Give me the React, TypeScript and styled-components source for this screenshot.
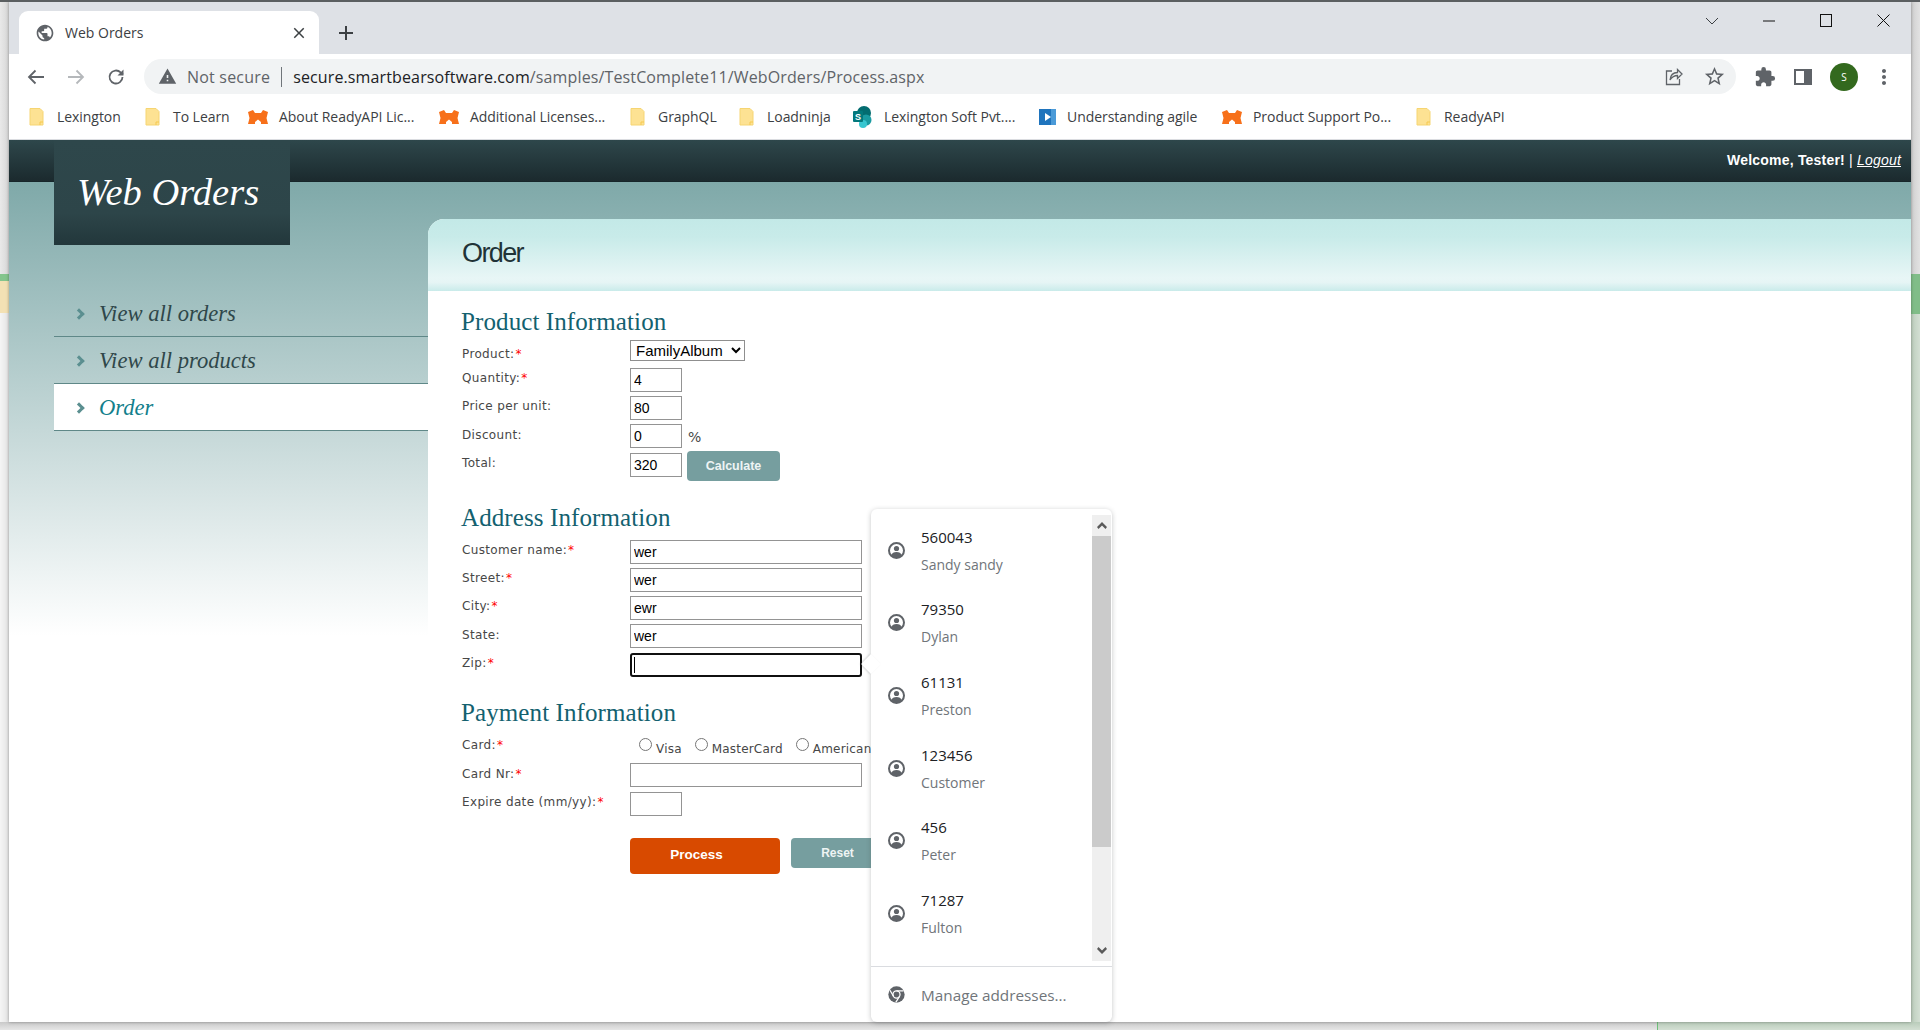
import styled, { createGlobalStyle } from "styled-components";
import { MdAdd, MdClose, MdExtension, MdMoreVert, MdPublic, MdStarBorder, MdWarning } from "react-icons/md";

type BookmarkKind = "folder" | "fox" | "sharepoint" | "video";

const bookmarks: { label: string; kind: BookmarkKind; w: number }[] = [
  { label: "Lexington", kind: "folder", w: 116 },
  { label: "To Learn", kind: "folder", w: 103 },
  { label: "About ReadyAPI Lic...", kind: "fox", w: 191 },
  { label: "Additional Licenses...", kind: "fox", w: 191 },
  { label: "GraphQL", kind: "folder", w: 109 },
  { label: "Loadninja", kind: "folder", w: 114 },
  { label: "Lexington Soft Pvt....", kind: "sharepoint", w: 186 },
  { label: "Understanding agile", kind: "video", w: 183 },
  { label: "Product Support Po...", kind: "fox", w: 194 },
  { label: "ReadyAPI", kind: "folder", w: 100 },
];

const addresses = [
  { zip: "560043", name: "Sandy sandy" },
  { zip: "79350", name: "Dylan" },
  { zip: "61131", name: "Preston" },
  { zip: "123456", name: "Customer" },
  { zip: "456", name: "Peter" },
  { zip: "71287", name: "Fulton" },
];

const BookmarkIcon = ({ kind }: { kind: BookmarkKind }) => {
  if (kind === "folder")
    return (
      <svg width="15" height="19" viewBox="0 0 15 19">
        <path d="M1 1.500h10l3 3V18H1z" fill="#fde293" stroke="#f6d572" />
        <path d="M11 18v-3h3" fill="none" stroke="#f6c94f" />
      </svg>
    );
  if (kind === "fox")
    return (
      <svg width="20" height="14" viewBox="0 0 20 14">
        <path d="M0 2l5-2 2 3h6l2-3 5 2-1.500 6L20 14h-7v-2l-3-2.500L7 12v2H0l1.500-6z" fill="#f7701a" />
      </svg>
    );
  if (kind === "sharepoint")
    return (
      <svg width="20" height="22" viewBox="0 0 20 22">
        <circle cx="11" cy="7" r="7" fill="#036c70" />
        <circle cx="13" cy="14" r="5.500" fill="#1a9ba1" />
        <circle cx="10" cy="18" r="4" fill="#37c6d0" />
        <rect x="0" y="5" width="10" height="11" rx="1" fill="#03787c" />
        <text x="5" y="14" fontSize="9" fontWeight="700" textAnchor="middle" fill="#fff" fontFamily="Liberation Sans">
          S
        </text>
      </svg>
    );
  return (
    <svg width="17" height="16" viewBox="0 0 17 16">
      <rect width="17" height="16" fill="#1f74bd" />
      <rect x="12" width="5" height="16" fill="#4a9ad8" />
      <path d="M6 4l6 4-6 4z" fill="#fff" />
    </svg>
  );
};

const ChromeLogo = () => (
  <svg width="17" height="17" viewBox="0 0 24 24">
    <circle cx="12" cy="12" r="11.500" fill="#5f6368" />
    <circle cx="12" cy="12" r="5" fill="#5f6368" stroke="#fff" strokeWidth="1.800" />
    <path d="M12 7h10M7.700 14.500L2.800 6M16.300 14.500L11 23" stroke="#fff" strokeWidth="1.800" fill="none" />
  </svg>
);

const PersonIcon = () => (
  <svg width="17" height="17" viewBox="0 0 17 17">
    <circle cx="8.500" cy="8.500" r="7.500" fill="none" stroke="#5f6368" strokeWidth="2" />
    <circle cx="8.500" cy="6.500" r="2.600" fill="#5f6368" />
    <path d="M3 13.500c.8-2.500 3-3.500 5.500-3.500s4.700 1 5.500 3.500c-1.500 1.800-3.300 2.500-5.500 2.500s-4-.7-5.500-2.500z" fill="#5f6368" />
  </svg>
);

const App = () => (
  <Screen>
    <GlobalStyle />
    <TopRow>
      <Strip>
        <StripBlock $h={272} $bg="linear-gradient(90deg,#e9e9e9,#d6d6d6)" />
        <StripBlock $h={7} $bg="#84c58d" />
        <StripBlock $h={32} $bg="#f3e1b4" />
        <StripBlock $h={709} $bg="linear-gradient(90deg,#f5f5f5,#e3e3e3)" />
      </Strip>
      <Window>
        <TabStrip>
          <Tab>
            <MdPublic size={20} color="#5f6368" />
            <TabTitle>Web Orders</TabTitle>
            <MdClose size={18} color="#3c4043" />
          </Tab>
          <NewTab>
            <MdAdd size={24} color="#3c4043" />
          </NewTab>
          <WindowControls>
            <svg width="14" height="8" viewBox="0 0 14 8">
              <path d="M1 1l6 6 6-6" fill="none" stroke="#3c4043" />
            </svg>
            <svg width="12" height="2" viewBox="0 0 12 2">
              <path d="M0 1h12" stroke="#111" />
            </svg>
            <svg width="12" height="13" viewBox="0 0 12 13">
              <rect x=".5" y=".5" width="11" height="12" fill="none" stroke="#111" />
            </svg>
            <svg width="13" height="13" viewBox="0 0 13 13">
              <path d="M.5.500l12 12M12.500.500l-12 12" stroke="#111" />
            </svg>
          </WindowControls>
        </TabStrip>
        <Toolbar>
          <NavIcons>
            <svg width="18" height="16" viewBox="0 0 18 16">
              <path d="M17 8H2M8.500 1.500L2 8l6.500 6.500" fill="none" stroke="#5f6368" strokeWidth="1.800" />
            </svg>
            <svg width="18" height="16" viewBox="0 0 18 16">
              <path d="M1 8h15M9.500 1.500L16 8l-6.500 6.500" fill="none" stroke="#b5b8bb" strokeWidth="1.800" />
            </svg>
            <svg width="18" height="18" viewBox="0 0 18 18">
              <path d="M15.500 9a6.500 6.500 0 1 1-1.900-4.600L16 6.500" fill="none" stroke="#5f6368" strokeWidth="1.800" />
              <path d="M16.500 1.500v6h-6z" fill="#5f6368" />
            </svg>
          </NavIcons>
          <Omnibox>
            <MdWarning size={19} color="#5f6368" />
            <NotSecure>Not secure</NotSecure>
            <UrlDivider />
            <Url>
              secure.smartbearsoftware.com<UrlPath>/samples/TestComplete11/WebOrders/Process.aspx</UrlPath>
            </Url>
            <OmniIcons>
              <svg width="18" height="18" viewBox="0 0 18 18">
                <path
                  d="M7 3H1.500v13.500h13V11M5 12c.500-5 3.500-7.500 7.500-7.500V1.500L17 6l-4.500 4.500V7.500C9.500 7.500 7 9 5 12z"
                  fill="none"
                  stroke="#5f6368"
                  strokeWidth="1.300"
                />
              </svg>
              <MdStarBorder size={23} color="#5f6368" />
            </OmniIcons>
          </Omnibox>
          <ProfileIcons>
            <MdExtension size={22} color="#5f6368" />
            <svg width="18" height="16" viewBox="0 0 18 16">
              <path d="M0 0h18v16H0zM2 2v12h8V2z" fill="#5f6368" fillRule="evenodd" />
            </svg>
            <Avatar>S</Avatar>
            <MdMoreVert size={24} color="#5f6368" />
          </ProfileIcons>
        </Toolbar>
        <BookmarkBar>
          {bookmarks.map((bookmark) => (
            <Bookmark key={bookmark.label} $w={bookmark.w}>
              <BookmarkGlyph $gap={bookmark.kind === "folder" ? 13 : 11}>
                <BookmarkIcon kind={bookmark.kind} />
              </BookmarkGlyph>
              <span>{bookmark.label}</span>
            </Bookmark>
          ))}
        </BookmarkBar>
        <Page>
          <Masthead>
            <Welcome>
              Welcome, Tester! <Pipe>|</Pipe> <Logout>Logout</Logout>
            </Welcome>
          </Masthead>
          <Main>
            <Sidebar>
              <Logo>Web Orders</Logo>
              <Nav>
                <NavItem>
                  <Chevron />
                  View all orders
                </NavItem>
                <NavItem>
                  <Chevron />
                  View all products
                </NavItem>
                <NavItem $active>
                  <Chevron />
                  Order
                </NavItem>
              </Nav>
            </Sidebar>
            <Panel>
              <PanelHeader>Order</PanelHeader>
              <PanelBody>
                <SectionTitle $gap={3}>Product Information</SectionTitle>
                <Row $h={28}>
                  <Label $top={6}>
                    Product:<Req>*</Req>
                  </Label>
                  <ProductSelect defaultValue="FamilyAlbum">
                    <option>FamilyAlbum</option>
                  </ProductSelect>
                </Row>
                <Row $h={28}>
                  <Label>
                    Quantity:<Req>*</Req>
                  </Label>
                  <TextField $small defaultValue="4" />
                </Row>
                <Row $h={28}>
                  <Label>Price per unit:</Label>
                  <TextField $small defaultValue="80" />
                </Row>
                <Row $h={29}>
                  <Label $top={3}>Discount:</Label>
                  <TextField $small defaultValue="0" />
                  <Percent>%</Percent>
                </Row>
                <Row $h={34}>
                  <Label>Total:</Label>
                  <TextField $small defaultValue="320" />
                  <CalcButton>Calculate</CalcButton>
                </Row>

                <SectionTitle $gap={7}>Address Information</SectionTitle>
                <Row $h={28}>
                  <Label>
                    Customer name:<Req>*</Req>
                  </Label>
                  <TextField defaultValue="wer" />
                </Row>
                <Row $h={28}>
                  <Label>
                    Street:<Req>*</Req>
                  </Label>
                  <TextField defaultValue="wer" />
                </Row>
                <Row $h={28}>
                  <Label>
                    City:<Req>*</Req>
                  </Label>
                  <TextField defaultValue="ewr" />
                </Row>
                <Row $h={29}>
                  <Label $top={3}>State:</Label>
                  <TextField defaultValue="wer" />
                </Row>
                <Row $h={29}>
                  <Label>
                    Zip:<Req>*</Req>
                  </Label>
                  <ZipField />
                </Row>

                <SectionTitle $gap={7}>Payment Information</SectionTitle>
                <Row $h={28}>
                  <Label>
                    Card:<Req>*</Req>
                  </Label>
                  <CardOptions>
                    <CardOption>
                      <input type="radio" name="card" />
                      Visa
                    </CardOption>
                    <CardOption>
                      <input type="radio" name="card" />
                      MasterCard
                    </CardOption>
                    <CardOption>
                      <input type="radio" name="card" />
                      American Express
                    </CardOption>
                  </CardOptions>
                </Row>
                <Row $h={29}>
                  <Label $top={3}>
                    Card Nr:<Req>*</Req>
                  </Label>
                  <TextField />
                </Row>
                <Row $h={46}>
                  <Label>
                    Expire date (mm/yy):<Req>*</Req>
                  </Label>
                  <TextField $small />
                </Row>
                <Row $h={40}>
                  <Label />
                  <ProcessButton>Process</ProcessButton>
                  <ResetButton>Reset</ResetButton>
                </Row>
              </PanelBody>
              <Popup>
                <PopupList>
                  <PopupRows>
                    {addresses.map((address) => (
                      <Suggestion key={address.zip}>
                        <PersonIcon />
                        <SuggestionText>
                          <Zip>{address.zip}</Zip>
                          <Person>{address.name}</Person>
                        </SuggestionText>
                      </Suggestion>
                    ))}
                  </PopupRows>
                  <Scrollbar>
                    <ScrollButton>
                      <svg width="10" height="7" viewBox="0 0 10 7">
                        <path d="M5 0l5 5-1.500 2L5 3.500 1.500 7 0 5z" fill="#5a5a5a" />
                      </svg>
                    </ScrollButton>
                    <ScrollThumb />
                    <ScrollTrack />
                    <ScrollButton>
                      <svg width="10" height="7" viewBox="0 0 10 7">
                        <path d="M5 7L0 2l1.500-2L5 3.500 8.500 0 10 2z" fill="#5a5a5a" />
                      </svg>
                    </ScrollButton>
                  </Scrollbar>
                </PopupList>
                <ManageRow>
                  <ChromeLogo />
                  <span>Manage addresses...</span>
                </ManageRow>
              </Popup>
            </Panel>
          </Main>
        </Page>
      </Window>
      <Strip>
        <StripBlock $h={272} $bg="linear-gradient(90deg,#cfcfcf,#e2e2e2)" />
        <StripBlock $h={40} $bg="#80bd88" />
        <StripBlock $h={708} $bg="linear-gradient(90deg,#bccdbc,#d3dfd3)" />
      </Strip>
    </TopRow>
    <BottomRow>
      <BottomGray />
      <BottomGreen />
    </BottomRow>
  </Screen>
);

const GlobalStyle = createGlobalStyle`
  html, body { margin: 0; padding: 0; background: #fff; }
  * { box-sizing: border-box; }
  svg { flex: none; }
`;

const uiFont = `"Open Sans", "Noto Sans", sans-serif`;
const pageFont = `"DejaVu Sans", Verdana, sans-serif`;
const serifFont = `"Liberation Serif", Georgia, serif`;

const Screen = styled.div`
  width: 1920px;
  height: 1030px;
  border-top: 2px solid #5b5f61;
  display: flex;
  flex-direction: column;
  overflow: hidden;
  font-family: ${uiFont};
`;

const TopRow = styled.div`
  display: flex;
  height: 1020px;
`;

const Strip = styled.div`
  width: 9px;
  display: flex;
  flex-direction: column;
`;

const StripBlock = styled.div<{ $h: number; $bg: string }>`
  height: ${({ $h }) => $h}px;
  background: ${({ $bg }) => $bg};
`;

const BottomRow = styled.div`
  display: flex;
  height: 8px;
`;

const BottomGray = styled.div`
  width: 1658px;
  background: linear-gradient(#c9c9c9, #e6e6e6);
  border-right: 1px solid #6fbf7a;
`;

const BottomGreen = styled.div`
  flex: 1;
  background: linear-gradient(#b9ccba, #d3dfd3);
`;

const Window = styled.div`
  width: 1902px;
  display: flex;
  flex-direction: column;
  background: #fff;
  box-shadow: 0 0 3px rgba(0, 0, 0, 0.35);
  position: relative;
`;

const TabStrip = styled.div`
  height: 52px;
  background: #dee1e6;
  display: flex;
  align-items: flex-end;
  padding-left: 10px;
`;

const Tab = styled.div`
  width: 300px;
  height: 43px;
  background: #fff;
  border-radius: 9px 9px 0 0;
  display: flex;
  align-items: center;
  gap: 10px;
  padding: 0 11px 0 16px;
  color: #3c4043;
`;

const TabTitle = styled.span`
  flex: 1;
  font-size: 14px;
`;

const NewTab = styled.div`
  height: 43px;
  width: 24px;
  margin-left: 15px;
  display: flex;
  align-items: center;
`;

const WindowControls = styled.div`
  margin-left: auto;
  height: 52px;
  width: 220px;
  padding: 0 21px 15px 0;
  display: flex;
  align-items: center;
  justify-content: flex-end;
  gap: 45px;

  svg:first-child {
    margin-right: -1px;
  }
`;

const Toolbar = styled.div`
  height: 44px;
  display: flex;
  align-items: center;
  padding-top: 1px;
`;

const NavIcons = styled.div`
  width: 135px;
  padding-left: 18px;
  display: flex;
  align-items: center;
  gap: 22px;
`;

const Omnibox = styled.div`
  width: 1592px;
  height: 35px;
  background: #f1f3f4;
  border-radius: 18px;
  display: flex;
  align-items: center;
  padding: 0 10px 0 14px;
`;

const NotSecure = styled.span`
  margin-left: 10px;
  font-size: 16px;
  letter-spacing: 0.2px;
  color: #5f6368;
`;

const UrlDivider = styled.span`
  width: 1px;
  height: 20px;
  background: #70757a;
  margin: 0 11px 0 11px;
`;

const Url = styled.span`
  font-size: 16px;
  letter-spacing: 0.13px;
  color: #202124;
`;

const UrlPath = styled.span`
  color: #5f6368;
`;

const OmniIcons = styled.div`
  margin-left: auto;
  display: flex;
  align-items: center;
  gap: 20px;
`;

const ProfileIcons = styled.div`
  flex: 1;
  padding-left: 18px;
  display: flex;
  align-items: center;
  gap: 18px;
`;

const Avatar = styled.div`
  width: 28px;
  height: 28px;
  border-radius: 50%;
  background: #33691e;
  color: #fff;
  font-size: 10px;
  display: flex;
  align-items: center;
  justify-content: center;
  margin-right: -4px;
`;

const BookmarkBar = styled.div`
  height: 42px;
  display: flex;
  align-items: center;
  padding: 0 0 4px 20px;
  border-bottom: 1px solid #dadce0;
`;

const Bookmark = styled.div<{ $w: number }>`
  width: ${({ $w }) => $w}px;
  flex: none;
  display: flex;
  align-items: center;
  font-size: 14px;
  letter-spacing: -0.05px;
  color: #3c4043;
  white-space: nowrap;
`;

const BookmarkGlyph = styled.span<{ $gap: number }>`
  display: flex;
  align-items: center;
  margin-right: ${({ $gap }) => $gap}px;
`;

const Page = styled.div`
  flex: 1;
  display: flex;
  flex-direction: column;
  min-height: 0;
`;

const Masthead = styled.div`
  height: 42px;
  flex: none;
  background: linear-gradient(#2e474b, #1b2a2e);
  border-bottom: 1px solid #16262a;
  display: flex;
  align-items: center;
  justify-content: flex-end;
  padding: 0 10px 1px;
`;

const Welcome = styled.div`
  color: #fff;
  font: 700 14px "Liberation Sans", Arial, sans-serif;
  letter-spacing: 0.2px;
`;

const Pipe = styled.span`
  font-weight: 400;
`;

const Logout = styled.span`
  font-weight: 400;
  font-style: italic;
  text-decoration: underline;
`;

const Main = styled.div`
  flex: 1;
  display: grid;
  grid-template-columns: 419px 1fr;
  background: linear-gradient(#7fa9a9, #fff 54%);
  padding-top: 37px;
  min-height: 0;
`;

const Sidebar = styled.aside`
  padding-left: 45px;
  margin-top: -79px;
  position: relative;
  z-index: 1;
`;

const Logo = styled.div`
  width: 236px;
  height: 105px;
  background: linear-gradient(#2e474b, #2d4549 70%, #22373b);
  color: #fff;
  font: italic 400 38.500px/105px ${serifFont};
  padding-left: 23px;
  margin-bottom: 45px;
`;

const Nav = styled.nav`
  display: flex;
  flex-direction: column;
`;

const NavItem = styled.div<{ $active?: boolean }>`
  height: 47px;
  display: flex;
  align-items: center;
  padding: 2px 0 0 21px;
  border-bottom: 1px solid #5f8888;
  font: italic 400 22.600px ${serifFont};
  color: ${({ $active }) => ($active ? "#137f8c" : "#2f474a")};
  background: ${({ $active }) => ($active ? "#fff" : "transparent")};
`;

const Chevron = styled.span`
  width: 8px;
  height: 8px;
  border-top: 3px solid #5b8f90;
  border-right: 3px solid #5b8f90;
  transform: rotate(45deg);
  margin-right: 16px;
  flex: none;
`;

const Panel = styled.section`
  position: relative;
  background: #fff;
  border-top-left-radius: 16px;
`;

const PanelHeader = styled.h1`
  margin: 0;
  height: 72px;
  padding: 18px 0 0 34px;
  border-top-left-radius: 16px;
  background: linear-gradient(#c3e9e7 0, #c8ebe9 25%, #e8f6f6 82%, #e6f5f5 88%, #c9ebea 100%);
  font: 400 27px/32px "Liberation Sans", Arial, sans-serif;
  letter-spacing: -1.600px;
  color: #1f3337;
`;

const PanelBody = styled.div`
  padding-left: 34px;
`;

const SectionTitle = styled.h2<{ $gap: number }>`
  margin: 15px 0 ${({ $gap }) => $gap}px -1px;
  height: 31px;
  font: 400 25px/31px ${serifFont};
  letter-spacing: 0.1px;
  color: #13616f;
`;

const Row = styled.div<{ $h: number }>`
  height: ${({ $h }) => $h}px;
  display: flex;
  align-items: flex-start;
`;

const Label = styled.div<{ $top?: number }>`
  width: 168px;
  flex: none;
  padding-top: ${({ $top }) => $top ?? 2}px;
  font: 400 12px/16px ${pageFont};
  letter-spacing: 0.35px;
  color: #474747;
`;

const Req = styled.span`
  color: #f00;
  margin-left: 1px;
`;

const ProductSelect = styled.select`
  width: 115px;
  height: 21px;
  padding: 0 0 0 1px;
  border: 1px solid #8f8f8f;
  background: #fff;
  font: 400 15px "Liberation Sans", Arial, sans-serif;
  color: #000;
`;

const TextField = styled.input<{ $small?: boolean }>`
  width: ${({ $small }) => ($small ? 52 : 232)}px;
  height: 24px;
  padding: 0 3px;
  border: 1px solid #949494;
  border-radius: 0;
  font: 400 14px "Liberation Sans", Arial, sans-serif;
  color: #000;
`;

const ZipField = styled(TextField)`
  border: 2px solid #101010;
  border-radius: 3px;
  background: linear-gradient(#000, #000) no-repeat 2px 2px / 1px 16px;
`;

const Percent = styled.span`
  margin: 3px 0 0 6px;
  font: 400 14px/20px ${pageFont};
  color: #474747;
`;

const CalcButton = styled.div`
  margin: -2px 0 0 5px;
  width: 93px;
  height: 30px;
  border-radius: 4px;
  background: #769e9f;
  color: #eef4f4;
  font: 700 12.500px/30px "Liberation Sans", Arial, sans-serif;
  text-align: center;
`;

const CardOptions = styled.div`
  display: flex;
  padding: 3px 0 0 9px;
  white-space: nowrap;
`;

const CardOption = styled.label`
  display: flex;
  align-items: flex-start;
  margin-right: 13px;
  font: 400 12px/14px ${pageFont};
  letter-spacing: 0.2px;
  color: #474747;
  padding-top: 4px;

  input {
    margin: -4px 4px 0 0;
    width: 13px;
    height: 13px;
  }
`;

const ProcessButton = styled.div`
  width: 150px;
  height: 36px;
  padding-right: 17px;
  border-radius: 4px;
  background: #d84a00;
  color: #fff;
  font: 700 13.500px/34px "Liberation Sans", Arial, sans-serif;
  text-align: center;
`;

const ResetButton = styled.div`
  margin-left: 11px;
  width: 93px;
  height: 30px;
  border-radius: 4px;
  background: #769e9f;
  color: #eef4f4;
  font: 700 12px/31px "Liberation Sans", Arial, sans-serif;
  text-align: center;
`;

const Popup = styled.div`
  position: absolute;
  left: 443px;
  top: 290px;
  z-index: 2;
  width: 241px;
  height: 513px;
  padding-top: 6px;
  background: #fff;
  border-radius: 6px;
  box-shadow: 0 1px 5px rgba(60, 64, 67, 0.3);
  display: flex;
  flex-direction: column;

  &::before {
    content: "";
    position: absolute;
    left: -7px;
    top: 148px;
    width: 14px;
    height: 14px;
    background: #fff;
    box-shadow: -1px 1px 2px rgba(60, 64, 67, 0.2);
    transform: rotate(45deg);
  }
`;

const PopupList = styled.div`
  height: 446px;
  display: flex;
  position: relative;
`;

const PopupRows = styled.div`
  width: 221px;
`;

const Suggestion = styled.div`
  height: 72.600px;
  display: flex;
  align-items: center;
  padding: 0 0 2px 17px;
  gap: 16px;
`;

const SuggestionText = styled.div`
  display: flex;
  flex-direction: column;
  margin-top: 1px;
`;

const Zip = styled.span`
  font-size: 15px;
  line-height: 27px;
  color: #202124;
`;

const Person = styled.span`
  font-size: 14px;
  line-height: 27px;
  color: #70757a;
`;

const Scrollbar = styled.div`
  width: 19px;
  height: 446px;
  display: flex;
  flex-direction: column;
  background: #efefef;
`;

const ScrollButton = styled.div`
  height: 21px;
  flex: none;
  display: flex;
  align-items: center;
  justify-content: center;
`;

const ScrollThumb = styled.div`
  height: 311px;
  flex: none;
  background: #cbcbcb;
`;

const ScrollTrack = styled.div`
  flex: 1;
`;

const ManageRow = styled.div`
  flex: 1;
  margin-top: 5px;
  padding-left: 17px;
  border-top: 1px solid #dadce0;
  display: flex;
  align-items: center;
  gap: 16px;
  font-size: 15.300px;
  color: #70757a;
`;

export default App;
